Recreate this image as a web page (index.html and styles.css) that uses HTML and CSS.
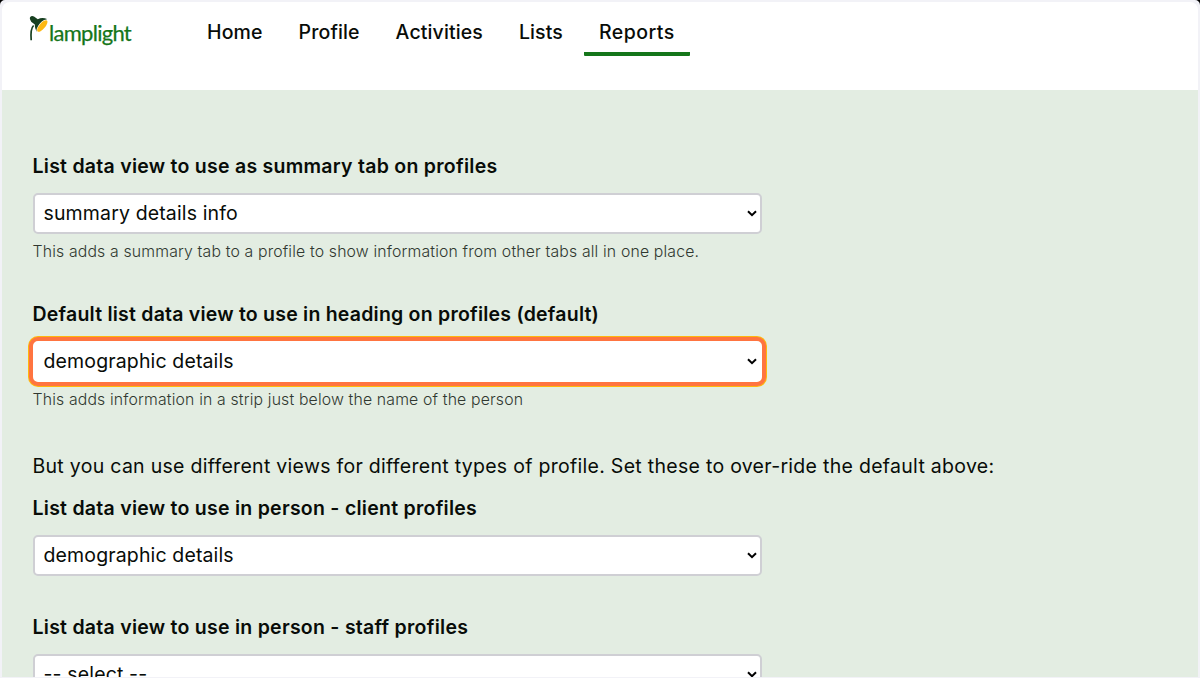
FILE: index.html
```html
<!DOCTYPE html>
<html lang="en">
<head>
<meta charset="utf-8">
<title>Lamplight</title>
<link rel="stylesheet" href="styles.css">
</head>
<body>
<div class="window">
  <header class="header">
    <a class="logo">
      <svg class="lamp" width="20" height="28" viewBox="0 0 20 28">
        <path d="M4.600 10.500C1.900 13 1.600 18 2.200 25.200" fill="none" stroke="#173f20" stroke-width="1.700"/>
        <path d="M1 4.200C0 1.500 3 0 5 1.500L8.800 4.200C11.500 2.800 15 2.800 18 4L8 16.800C6.300 14.500 5.800 12 5.800 9.500L2.200 6.800Z" fill="#173f20"/>
        <ellipse cx="13.300" cy="11" rx="3.500" ry="8" transform="rotate(40 13.300 11)" fill="#fff"/>
        <ellipse cx="13.300" cy="11" rx="2.900" ry="7.200" transform="rotate(40 13.300 11)" fill="#fdb813"/>
      </svg>
      <span class="brand">lamplight</span>
    </a>
    <nav class="nav">
      <a class="tab">Home</a>
      <a class="tab">Profile</a>
      <a class="tab">Activities</a>
      <a class="tab">Lists</a>
      <a class="tab active">Reports</a>
    </nav>
  </header>
  <main class="content">
    <section class="field">
      <h2 class="label">List data view to use as summary tab on profiles</h2>
      <div class="select"><span>summary details info</span><svg class="chevron" width="10" height="7" viewBox="0 0 10 7"><path d="M1 1.200l4 4 4-4"/></svg></div>
      <p class="help">This adds a summary tab to a profile to show information from other tabs all in one place.</p>
    </section>
    <section class="field second">
      <h2 class="label long">Default list data view to use in heading on profiles (default)</h2>
      <div class="select focus"><span>demographic details</span><svg class="chevron" width="10" height="7" viewBox="0 0 10 7"><path d="M1 1.200l4 4 4-4"/></svg></div>
      <p class="help">This adds information in a strip just below the name of the person</p>
    </section>
    <p class="note">But you can use different views for different types of profile. Set these to over-ride the default above:</p>
    <section class="field">
      <h2 class="label">List data view to use in person - client profiles</h2>
      <div class="select"><span>demographic details</span><svg class="chevron" width="10" height="7" viewBox="0 0 10 7"><path d="M1 1.200l4 4 4-4"/></svg></div>
    </section>
    <section class="field last">
      <h2 class="label">List data view to use in person - staff profiles</h2>
      <div class="select"><span>-- select --</span><svg class="chevron" width="10" height="7" viewBox="0 0 10 7"><path d="M1 1.200l4 4 4-4"/></svg></div>
    </section>
  </main>
</div>
</body>
</html>
```

FILE: styles.css
```css
* { box-sizing: border-box; }
html { background: #000; overflow: hidden; }
body { margin: 0; height: 678px; overflow: hidden; font-family: Inter, "Open Sans", sans-serif; color: #080c08; background: #000; }
.window { height: 678px; border: 2px solid #f2f2f7; border-bottom-width: 1px; border-radius: 5px 5px 0 0; background: #f2f2f7; overflow: hidden; }
.header { height: 88px; display: flex; align-items: flex-start; padding-left: 27px; background: #fff; border-radius: 8px 8px 0 0; }
.logo { display: flex; width: 163px; padding-top: 13px; }
.brand { font: 22px/28px Lato, sans-serif; letter-spacing: -.72px; color: #15761a; padding-top: 4px; -webkit-text-stroke: .25px #15761a; }
.nav { display: flex; gap: 6px; }
.tab { height: 54px; padding: 0 15px; font-size: 19.5px; letter-spacing: .12px; line-height: 60px; font-weight: 500; border-bottom: 3px solid transparent; border-radius: 1px; }
.tab.active { letter-spacing: .47px; border-bottom: 4px solid #15761a; }
.content { height: 587px; overflow: hidden; background: #e3ede2; padding: 63px 30px 0 30.5px; }
.label { margin: 0 0 14px; font-size: 19.5px; line-height: 26px; font-weight: 600; letter-spacing: .26px; white-space: nowrap; }
.label.long { letter-spacing: .22px; }
.select { width: 729.5px; height: 41px; border: 2px solid #cfcfd4; border-radius: 5px; background: #fff; display: flex; align-items: center; justify-content: space-between; padding: 0 3px 0 9px; font-size: 19.5px; letter-spacing: .14px; }
.select span { padding-bottom: 2px; }
.chevron path { fill: none; stroke: #000; stroke-width: 2; }
.select.focus { border-color: #fff; box-shadow: 0 0 0 4px #ff7440, 0 0 0 5px #ffb60c; }
.help { margin: 5px 0 0; font-size: 15.8px; line-height: 25px; color: #303830; font-weight: 300; letter-spacing: .16px; white-space: nowrap; }
.second { margin-top: 37px; }
.note { margin: 41px 0 16px; font-size: 19.5px; line-height: 26px; letter-spacing: .29px; white-space: nowrap; }
.last { margin-top: 38px; }
```
